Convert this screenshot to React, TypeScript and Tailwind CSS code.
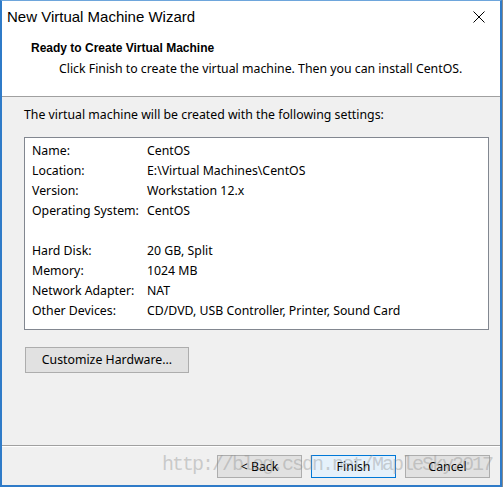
import React from "react";

const rows: [string, string][] = [
  ["Name:", "CentOS"],
  ["Location:", "E:\\Virtual Machines\\CentOS"],
  ["Version:", "Workstation 12.x"],
  ["Operating System:", "CentOS"],
  ["", ""],
  ["Hard Disk:", "20 GB, Split"],
  ["Memory:", "1024 MB"],
  ["Network Adapter:", "NAT"],
  ["Other Devices:", "CD/DVD, USB Controller, Printer, Sound Card"],
];

const body = { fontFamily: '"Noto Sans", "Liberation Sans", Arial, sans-serif' };

export default function App() {
  return (
    <div
      className="w-[503px] h-[487px] bg-[#8c8c8c] flex overflow-hidden"
      style={{ fontFamily: '"Liberation Sans", Arial, sans-serif' }}
    >
      <div className="relative w-[502px] h-[487px] flex flex-col border-t border-t-[#6ea6dc] border-l-2 border-r-2 border-b-2 border-[#2f7bc8] bg-[#f0f0f0] text-black">
        {/* header */}
        <div className="h-[96px] bg-white border-b border-[#a0a0a0] flex flex-col">
          <div className="h-[32px] flex items-center justify-between pl-[5px] pr-[15px]">
            <span className="text-[15px] leading-[16px] text-black">New Virtual Machine Wizard</span>
            <svg width="12" height="12" viewBox="0 0 12 12" className="block">
              <path d="M0.5 0.5 L11.5 11.5 M11.5 0.5 L0.5 11.5" stroke="#000" strokeWidth="1" fill="none" />
            </svg>
          </div>
          <div className="mt-[7px] pl-[29px] text-[12px] leading-[16px] font-bold">Ready to Create Virtual Machine</div>
          <div className="mt-[5px] pl-[57px] text-[12.3px] leading-[16px]" style={body}>
            Click Finish to create the virtual machine. Then you can install CentOS.
          </div>
        </div>

        {/* body */}
        <div className="flex-1 flex flex-col pt-[10px]" style={body}>
          <div className="pl-[22px] text-[12.3px] leading-[16px]">
            The virtual machine will be created with the following settings:
          </div>
          <div className="mt-[14px] ml-[22px] w-[465px] h-[193px] border border-[#828790] bg-white pt-[3px] pl-[7px]">
            {rows.map(([k, v], i) => (
              <div key={i} className="flex h-[20px] items-center text-[12.3px] leading-[16px]">
                <span className="w-[115px] shrink-0">{k}</span>
                <span>{v}</span>
              </div>
            ))}
          </div>
          <button className="mt-[17px] ml-[23px] w-[164px] h-[26px] border border-[#adadad] bg-[#e1e1e1] text-[12.3px] leading-[16px] text-black flex items-center justify-center">
            Customize Hardware...
          </button>
        </div>

        {/* footer */}
        <div className="border-t border-t-[#a0a0a0]" style={body}>
          <div className="border-t border-t-white h-[39px] flex justify-end gap-[9px] pr-[10px] pt-[8px]">
            <button className="w-[85px] h-[23px] border border-[#adadad] bg-[#e1e1e1] text-[12.3px] leading-[16px] text-black flex items-center justify-center">
              &lt; Back
            </button>
            <button className="w-[85px] h-[23px] border border-[#0078d7] bg-[#e5f1fb] text-[12.3px] leading-[16px] text-black flex items-center justify-center">
              Finish
            </button>
            <button className="w-[85px] h-[23px] border border-[#adadad] bg-[#e1e1e1] text-[12.3px] leading-[16px] text-black flex items-center justify-center">
              Cancel
            </button>
          </div>
        </div>

        {/* watermark */}
        <div
          className="absolute left-[160px] top-[452px] text-[20px] leading-[24px] tracking-[-2px] text-[#8c8c8c]/40 whitespace-nowrap pointer-events-none"
          style={{ fontFamily: '"Liberation Mono", "Courier New", monospace' }}
        >
          http://blog.csdn.net/MapleSky2017
        </div>
      </div>
    </div>
  );
}
